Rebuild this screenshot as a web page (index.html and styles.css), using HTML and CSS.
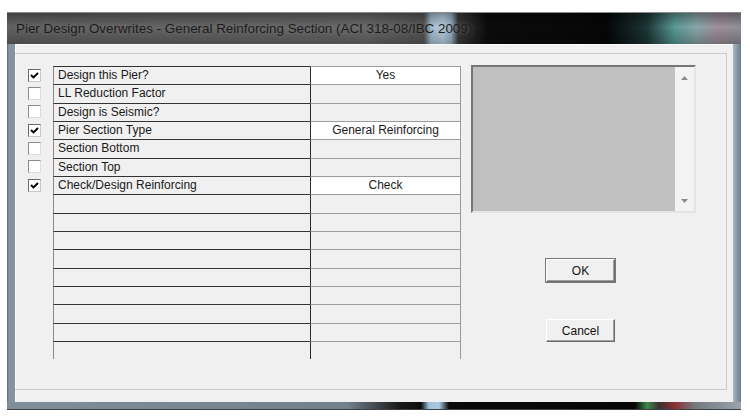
FILE: index.html
```html
<!DOCTYPE html>
<html lang="en">
<head>
    <meta charset="UTF-8">
    <meta name="viewport" content="width=device-width, initial-scale=1.0">
    <title>Pier Design Overwrites</title>
    <link rel="stylesheet" href="styles.css">
</head>
<body>
    <div class="window">
        <div class="titlebar">
            <span class="title">Pier Design Overwrites - General Reinforcing Section (ACI 318-08/IBC 2009)</span>
        </div>
        <div class="frame">
            <div class="client">
                <div class="panel">
                    <div class="grid">
                        <div class="row">
                            <div class="tick"><span class="box on"><svg viewBox="0 0 11 11"><polyline points="2,5 4.5,7.5 9,3"/></svg></span></div>
                            <div class="name">Design this Pier?</div>
                            <div class="value set">Yes</div>
                        </div>
                        <div class="row">
                            <div class="tick"><span class="box"></span></div>
                            <div class="name">LL Reduction Factor</div>
                            <div class="value"></div>
                        </div>
                        <div class="row">
                            <div class="tick"><span class="box"></span></div>
                            <div class="name">Design is Seismic?</div>
                            <div class="value"></div>
                        </div>
                        <div class="row">
                            <div class="tick"><span class="box on"><svg viewBox="0 0 11 11"><polyline points="2,5 4.5,7.5 9,3"/></svg></span></div>
                            <div class="name">Pier Section Type</div>
                            <div class="value set">General Reinforcing</div>
                        </div>
                        <div class="row">
                            <div class="tick"><span class="box"></span></div>
                            <div class="name">Section Bottom</div>
                            <div class="value"></div>
                        </div>
                        <div class="row">
                            <div class="tick"><span class="box"></span></div>
                            <div class="name">Section Top</div>
                            <div class="value"></div>
                        </div>
                        <div class="row">
                            <div class="tick"><span class="box on"><svg viewBox="0 0 11 11"><polyline points="2,5 4.5,7.5 9,3"/></svg></span></div>
                            <div class="name">Check/Design Reinforcing</div>
                            <div class="value set">Check</div>
                        </div>
                        <!-- spare rows -->
                        <div class="row"><div class="tick"></div><div class="name"></div><div class="value"></div></div>
                        <div class="row"><div class="tick"></div><div class="name"></div><div class="value"></div></div>
                        <div class="row"><div class="tick"></div><div class="name"></div><div class="value"></div></div>
                        <div class="row"><div class="tick"></div><div class="name"></div><div class="value"></div></div>
                        <div class="row"><div class="tick"></div><div class="name"></div><div class="value"></div></div>
                        <div class="row"><div class="tick"></div><div class="name"></div><div class="value"></div></div>
                        <div class="row"><div class="tick"></div><div class="name"></div><div class="value"></div></div>
                        <div class="row"><div class="tick"></div><div class="name"></div><div class="value"></div></div>
                        <div class="row"><div class="tick"></div><div class="name"></div><div class="value"></div></div>
                    </div>

                    <div class="side">
                        <div class="listbox">
                            <div class="well"></div>
                            <div class="scroll">
                                <svg class="arrow" viewBox="0 0 7 4"><polygon points="0,4 3.5,0 7,4"/></svg>
                                <svg class="arrow" viewBox="0 0 7 4"><polygon points="0,0 3.5,4 7,0"/></svg>
                            </div>
                        </div>
                        <div class="buttons">
                            <button class="btn default">OK</button>
                            <button class="btn cancel">Cancel</button>
                        </div>
                    </div>
                </div>
            </div>
        </div>
        <div class="frame-bottom"></div>
    </div>
</body>
</html>
```

FILE: styles.css
```css
body {
    margin: 0;
    background: #fff;
    font-family: "Liberation Sans", Arial, sans-serif;
    font-size: 12px;
    color: #111;
}
.window {
    margin: 12px 0 0 7px;
    width: 734px;
    height: 398px;
    display: flex;
    flex-direction: column;
    background: #7c8a95;
    box-shadow: inset 1px 0 0 #3a3f44;
}
.titlebar {
    height: 31px;
    padding-left: 9px;
    display: flex;
    align-items: center;
    background:
        linear-gradient(to bottom, rgba(0,0,0,0.35), rgba(0,0,0,0) 45%, rgba(0,0,0,0.25)),
        linear-gradient(to right, transparent 417px, rgba(175,208,232,0.9) 424px, rgba(195,220,238,0.95) 436px, rgba(170,205,230,0.85) 444px, transparent 451px),
        linear-gradient(to right, #636363 0, #6a6a6a 360px, #505050 440px, #0c0c0c 480px, #060606 600px, #1c3636 640px, #5a9a96 668px, #8aa6a8 690px, #a08e9a 712px, #8d9098 734px);
    border-top: 1px solid #8a8a8a;
}
.title {
    font-size: 13.4px;
    color: #1c1c1c;
    text-shadow: 0 0 5px rgba(120,120,120,0.6);
    white-space: nowrap;
}
.frame {
    flex: 1;
    display: flex;
    padding: 0 8px;
    background: linear-gradient(to right, #5f6b75 0, #8693a0 2px, #8693a0 8px, transparent 8px, transparent 726px, #a9b6c1 726px, #6d7c88 734px);
}
.client {
    flex: 1;
    padding-top: 9px;
    background: #f0f0f0;
    box-shadow: inset 1px 1px 0 #fbfbfb;
}
.panel {
    height: 324px;
    margin-right: 6px;
    padding: 11px 0 0 13px;
    display: flex;
    border: 1px solid #cbcbcb;
    border-left: none;
}
.grid {
    margin-top: 1px;
}
.row {
    display: grid;
    grid-template-columns: 25px 257px 151px;
    height: 18.33px;
}
.tick {
    display: flex;
    align-items: center;
}
.box {
    width: 13px;
    height: 13px;
    box-sizing: border-box;
    background: #fff;
    border: 1px solid;
    border-color: #8c8c8c #dcdcdc #dcdcdc #8c8c8c;
}
.box.on {
    border-color: #6a6a6a #c8c8c8 #c8c8c8 #6a6a6a;
}
.box svg {
    display: block;
    width: 11px;
    height: 11px;
    fill: none;
    stroke: #000;
    stroke-width: 1.9;
}
.name, .value {
    box-sizing: border-box;
    line-height: 17px;
    white-space: nowrap;
    overflow: hidden;
    color: #1a1a1a;
}
.name {
    padding-left: 4px;
    border-top: 1px solid #333;
    border-left: 1px solid #8a8a8a;
}
.value {
    text-align: center;
    border-top: 1px solid #9c9c9c;
    border-left: 1px solid #2c2c2c;
    border-right: 1px solid #9a9a9a;
}
.value.set {
    background: #fff;
}
.side {
    margin-left: 10px;
    display: flex;
    flex-direction: column;
}
.listbox {
    width: 225px;
    height: 148px;
    box-sizing: border-box;
    display: flex;
    border: 2px solid;
    border-color: #767676 #e4e4e4 #e4e4e4 #767676;
}
.well {
    flex: 1;
    background: #c0c0c0;
}
.scroll {
    width: 19px;
    background: #f3f3f3;
    display: flex;
    flex-direction: column;
    justify-content: space-between;
    align-items: center;
    padding: 9px 0 8px;
}
.arrow {
    width: 7px;
    height: 4px;
    fill: #8a8a8a;
}
.buttons {
    display: flex;
    flex-direction: column;
    padding-left: 75px;
}
.btn {
    width: 69px;
    height: 23px;
    padding: 0;
    font-family: "Liberation Sans", Arial, sans-serif;
    font-size: 12px;
    color: #111;
    background: #f0f0f0;
    border: 1px solid;
    border-color: #fff #6a6a6a #6a6a6a #fff;
    box-shadow: inset -1px -1px 0 #a0a0a0;
}
.btn.default {
    margin-top: 46px;
    outline: 1px solid #7a7a7a;
}
.btn.cancel {
    margin-top: 37px;
}
.frame-bottom {
    height: 8px;
    background: linear-gradient(to right, #7f8e99 0, #73818c 340px, #1a1a1a 392px, #0c0c0c 414px, #9fc3dc 422px, #abcae1 432px, #0a0a0a 442px, #050505 628px, #3c8a4c 640px, #3a3030 652px, #8a3232 668px, #74797f 688px, #9aa4ad 734px);
    box-shadow: inset 0 -1px 0 #3a3f44;
}
```
